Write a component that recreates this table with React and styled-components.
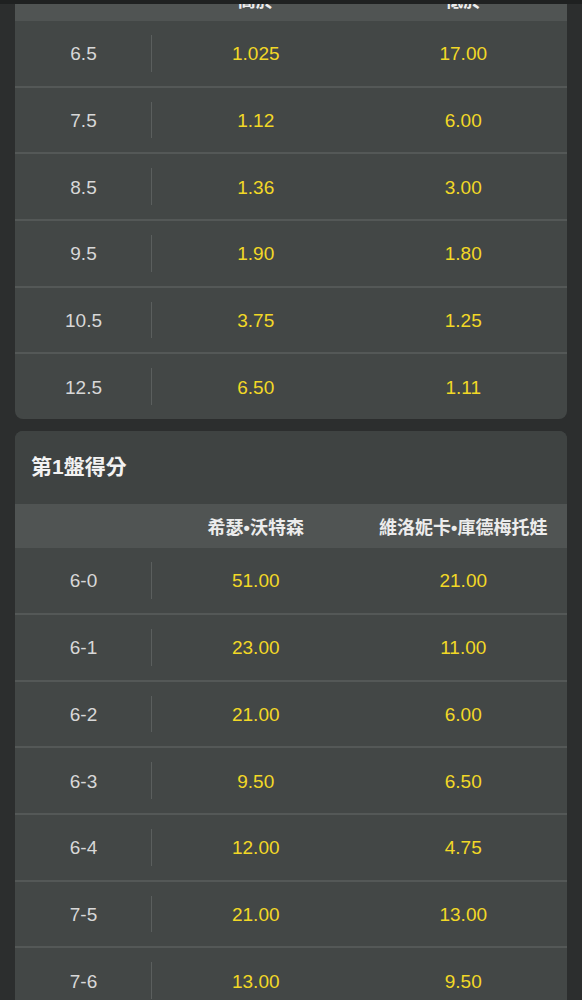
import React from "react"
import styled, { createGlobalStyle } from "styled-components"

const GlobalStyle = createGlobalStyle`
  html, body {
    margin: 0;
    padding: 0;
    background: #2c2e2e;
  }
  body {
    font-family: "Liberation Sans", "Noto Sans CJK TC", Arial, sans-serif;
    -webkit-font-smoothing: antialiased;
  }
`

const TopStrip = styled.div`
  position: fixed;
  top: 0;
  left: 0;
  right: 0;
  height: 4px;
  background: #1f2121;
  z-index: 2;
`

const Page = styled.div`
  display: flex;
  flex-direction: column;
  gap: 12px;
  padding: 0 15px 20px;
  width: 552px;
`

const Card = styled.section`
  background: #434746;
  border-radius: 8px;
  overflow: hidden;
  margin-top: ${(p) => p.$offset || 0}px;
`

const Title = styled.h2`
  margin: 0;
  height: 73px;
  box-sizing: border-box;
  display: flex;
  align-items: center;
  padding: 0 16px 5px;
  background: #3f4342;
  color: #f2f2f2;
  font-size: 21px;
  font-weight: 700;
  font-family: "Liberation Sans", "Noto Sans CJK TC", sans-serif;
`

const Grid = styled.div`
  display: grid;
  grid-template-columns: 137px minmax(0, 1fr) minmax(0, 1fr);
`

const HeadRow = styled(Grid)`
  height: 44px;
  background: #505453;
`

const HeadCell = styled.div`
  display: flex;
  align-items: center;
  justify-content: center;
  white-space: nowrap;
  color: #ececec;
  font-size: 18px;
  font-weight: 700;
  font-family: "Liberation Sans", "Noto Sans CJK TC", sans-serif;
`

const Row = styled(Grid)`
  height: 64.7px;
  & + & {
    border-top: 2px solid #545857;
  }
`

const LabelCell = styled.div`
  position: relative;
  display: flex;
  align-items: center;
  justify-content: center;
  padding-top: 2px;
  color: #d8d8d8;
  font-size: 19px;

  &::after {
    content: "";
    position: absolute;
    right: 0;
    top: 14px;
    bottom: 14px;
    width: 1px;
    background: #5b5f5e;
  }
`

const OddsCell = styled.div`
  display: flex;
  align-items: center;
  justify-content: center;
  padding-top: 2px;
  color: #f2d826;
  font-size: 19px;
`

const totals = [
  ["6.5", "1.025", "17.00"],
  ["7.5", "1.12", "6.00"],
  ["8.5", "1.36", "3.00"],
  ["9.5", "1.90", "1.80"],
  ["10.5", "3.75", "1.25"],
  ["12.5", "6.50", "1.11"],
]

const scores = [
  ["6-0", "51.00", "21.00"],
  ["6-1", "23.00", "11.00"],
  ["6-2", "21.00", "6.00"],
  ["6-3", "9.50", "6.50"],
  ["6-4", "12.00", "4.75"],
  ["7-5", "21.00", "13.00"],
  ["7-6", "13.00", "9.50"],
]

const OddsRows = ({ rows }) =>
  rows.map(([label, a, b]) => (
    <Row key={label}>
      <LabelCell>{label}</LabelCell>
      <OddsCell>{a}</OddsCell>
      <OddsCell>{b}</OddsCell>
    </Row>
  ))

const App = () => (
  <>
    <GlobalStyle />
    <TopStrip />
    <Page>
      <Card $offset={-23}>
        <HeadRow>
          <div />
          <HeadCell>高於</HeadCell>
          <HeadCell>低於</HeadCell>
        </HeadRow>
        <OddsRows rows={totals} />
      </Card>
      <Card>
        <Title>第1盤得分</Title>
        <HeadRow>
          <div />
          <HeadCell>希瑟•沃特森</HeadCell>
          <HeadCell>維洛妮卡•庫德梅托娃</HeadCell>
        </HeadRow>
        <OddsRows rows={scores} />
      </Card>
    </Page>
  </>
)

export default App
